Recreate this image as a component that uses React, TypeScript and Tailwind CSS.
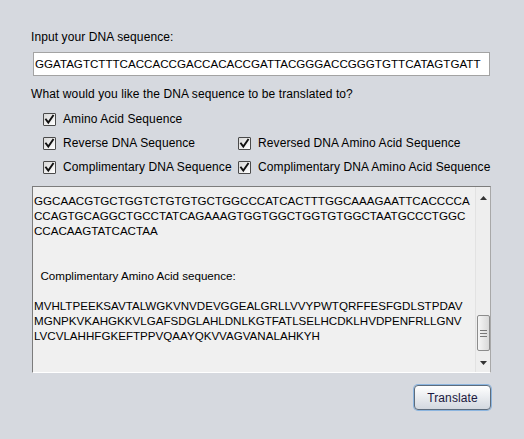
const dnaInput = 'GGATAGTCTTTCACCACCGACCACACCGATTACGGGACCGGGTGTTCATAGTGATT';

const outputLines = [
  'GGCAACGTGCTGGTCTGTGTGCTGGCCCATCACTTTGGCAAAGAATTCACCCCA',
  'CCAGTGCAGGCTGCCTATCAGAAAGTGGTGGCTGGTGTGGCTAATGCCCTGGC',
  'CCACAAGTATCACTAA',
  '',
  '',
  '  Complimentary Amino Acid sequence:',
  '',
  'MVHLTPEEKSAVTALWGKVNVDEVGGEALGRLLVVYPWTQRFFESFGDLSTPDAV',
  'MGNPKVKAHGKKVLGAFSDGLAHLDNLKGTFATLSELHCDKLHVDPENFRLLGNV',
  'LVCVLAHHFGKEFTPPVQAAYQKVVAGVANALAHKYH',
];

const Check = ({ label }: { label: string }) => (
  <div className="flex h-[13px] items-center gap-[7px]">
    <span className="flex h-[13px] w-[13px] shrink-0 items-center justify-center rounded-[1px] border border-[#4a4a4a] bg-gradient-to-br from-[#d8d8d8] to-[#ffffff]">
      <svg width="11" height="11" viewBox="0 0 11 11">
        <path d="M2 5.5 L4.3 8.6 L9 1.8" fill="none" stroke="#111" strokeWidth="1.9" strokeLinecap="square" />
      </svg>
    </span>
    <span className="whitespace-nowrap leading-[13px]">{label}</span>
  </div>
);

const ScrollBar = () => (
  <div className="flex w-[15px] shrink-0 flex-col border-l border-[#e2e2e2] bg-[#eeeeee]">
    <div className="flex h-[17px] items-center justify-center pt-[4px]">
      <svg width="7" height="4" viewBox="0 0 7 4">
        <path d="M0 4 L3.5 0 L7 4 Z" fill="#333" />
      </svg>
    </div>
    <div className="mt-[111px] ml-[1px] flex h-[36px] w-[13px] flex-col items-center justify-center gap-[2px] rounded-[2px] border border-[#8c8c8c] bg-gradient-to-r from-[#f6f6f6] to-[#d9d9d9]">
      <span className="h-px w-[7px] bg-[#777]" />
      <span className="h-px w-[7px] bg-[#777]" />
      <span className="h-px w-[7px] bg-[#777]" />
    </div>
    <div className="mt-[10px] flex justify-center">
      <svg width="7" height="4" viewBox="0 0 7 4">
        <path d="M0 0 L7 0 L3.5 4 Z" fill="#333" />
      </svg>
    </div>
  </div>
);

export default function App() {
  return (
    <div
      className="flex h-[439px] w-[524px] flex-col bg-[#d6d9df] pl-[31px] pt-[30px] text-[12px] tracking-[0.1px] text-black"
      style={{ fontFamily: '"Liberation Sans", Arial, sans-serif' }}
    >
      <div className="leading-[14px]">Input your DNA sequence:</div>

      <div className="ml-[2px] mt-[8px] flex h-[24px] w-[457px] items-center border border-[#a3a3a3] bg-white pl-[1px] text-[11.6px] tracking-normal">
        {dnaInput}
      </div>

      <div className="mt-[11px] leading-[14px]">What would you like the DNA sequence to be translated to?</div>

      <div className="ml-[12px] mt-[12px] grid grid-cols-[195px_auto] gap-y-[11px]">
        <Check label="Amino Acid Sequence" />
        <div />
        <Check label="Reverse DNA Sequence" />
        <Check label="Reversed DNA Amino Acid Sequence" />
        <Check label="Complimentary DNA Sequence" />
        <Check label="Complimentary DNA Amino Acid Sequence" />
      </div>

      <div className="ml-[1px] mt-[12px] flex h-[187px] w-[459px] border border-b-white border-l-[#7c7c7c] border-r-[#a8a8a8] border-t-[#7c7c7c] bg-[#f0f0f0]">
        <div className="flex-1 overflow-hidden whitespace-pre pl-[1px] pt-[6px] text-[11.6px] leading-[15px] tracking-normal">
          {outputLines.join('\n')}
        </div>
        <ScrollBar />
      </div>

      <div className="mt-[12px] flex justify-end pr-[33px]">
        <button className="h-[25px] w-[77px] rounded-[4px] border border-[#5d6c7c] bg-gradient-to-b from-[#ffffff] to-[#d3d8df] text-[12px] text-[#1b1840] shadow-[0_0_0_1px_#8cb5df]">
          Translate
        </button>
      </div>
    </div>
  );
}
